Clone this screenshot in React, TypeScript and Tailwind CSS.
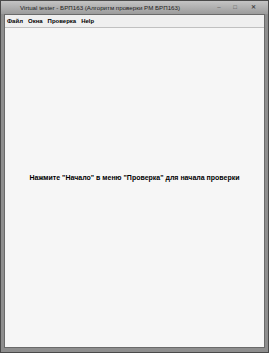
export default function App() {
    return (
        <div
            className="w-[269px] h-[353px] flex flex-col bg-[#8e8e8e] border border-[#4a4a4a] text-black"
            style={{ fontFamily: '"Liberation Sans", Arial, sans-serif' }}
        >
            <div className="h-[13px] flex items-center justify-between bg-gradient-to-b from-[#c4c4c4] to-[#9c9c9c]">
                <span className="pl-[19px] text-[6.2px] text-[#1e1e1e] whitespace-nowrap">
                    Virtual tester - БРП163 (Алгоритм проверки РМ БРП163)
                </span>
                <div className="flex items-center gap-[2px] pr-[6px] text-[6px] text-[#444]">
                    <span className="w-[14px] h-[9px] flex items-center justify-center">–</span>
                    <span className="w-[14px] h-[9px] flex items-center justify-center">□</span>
                    <span className="w-[18px] h-[9px] flex items-center justify-center font-bold">✕</span>
                </div>
            </div>
            <div className="flex-1 flex flex-col mx-[3px] mb-[4px] bg-[#f6f6f6] border border-[#6a6a6a]">
                <div className="h-[13px] flex items-center gap-[5px] pl-[2px] text-[6px] font-semibold bg-[#efefef] border-b border-[#c0c0c0]">
                    <span>Файл</span>
                    <span>Окна</span>
                    <span>Проверка</span>
                    <span>Help</span>
                </div>
                <div className="flex-1 flex items-center justify-center pb-[18px]">
                    <span className="text-[7px] font-bold whitespace-nowrap">
                        Нажмите "Начало" в меню "Проверка" для начала проверки
                    </span>
                </div>
            </div>
        </div>
    );
}
